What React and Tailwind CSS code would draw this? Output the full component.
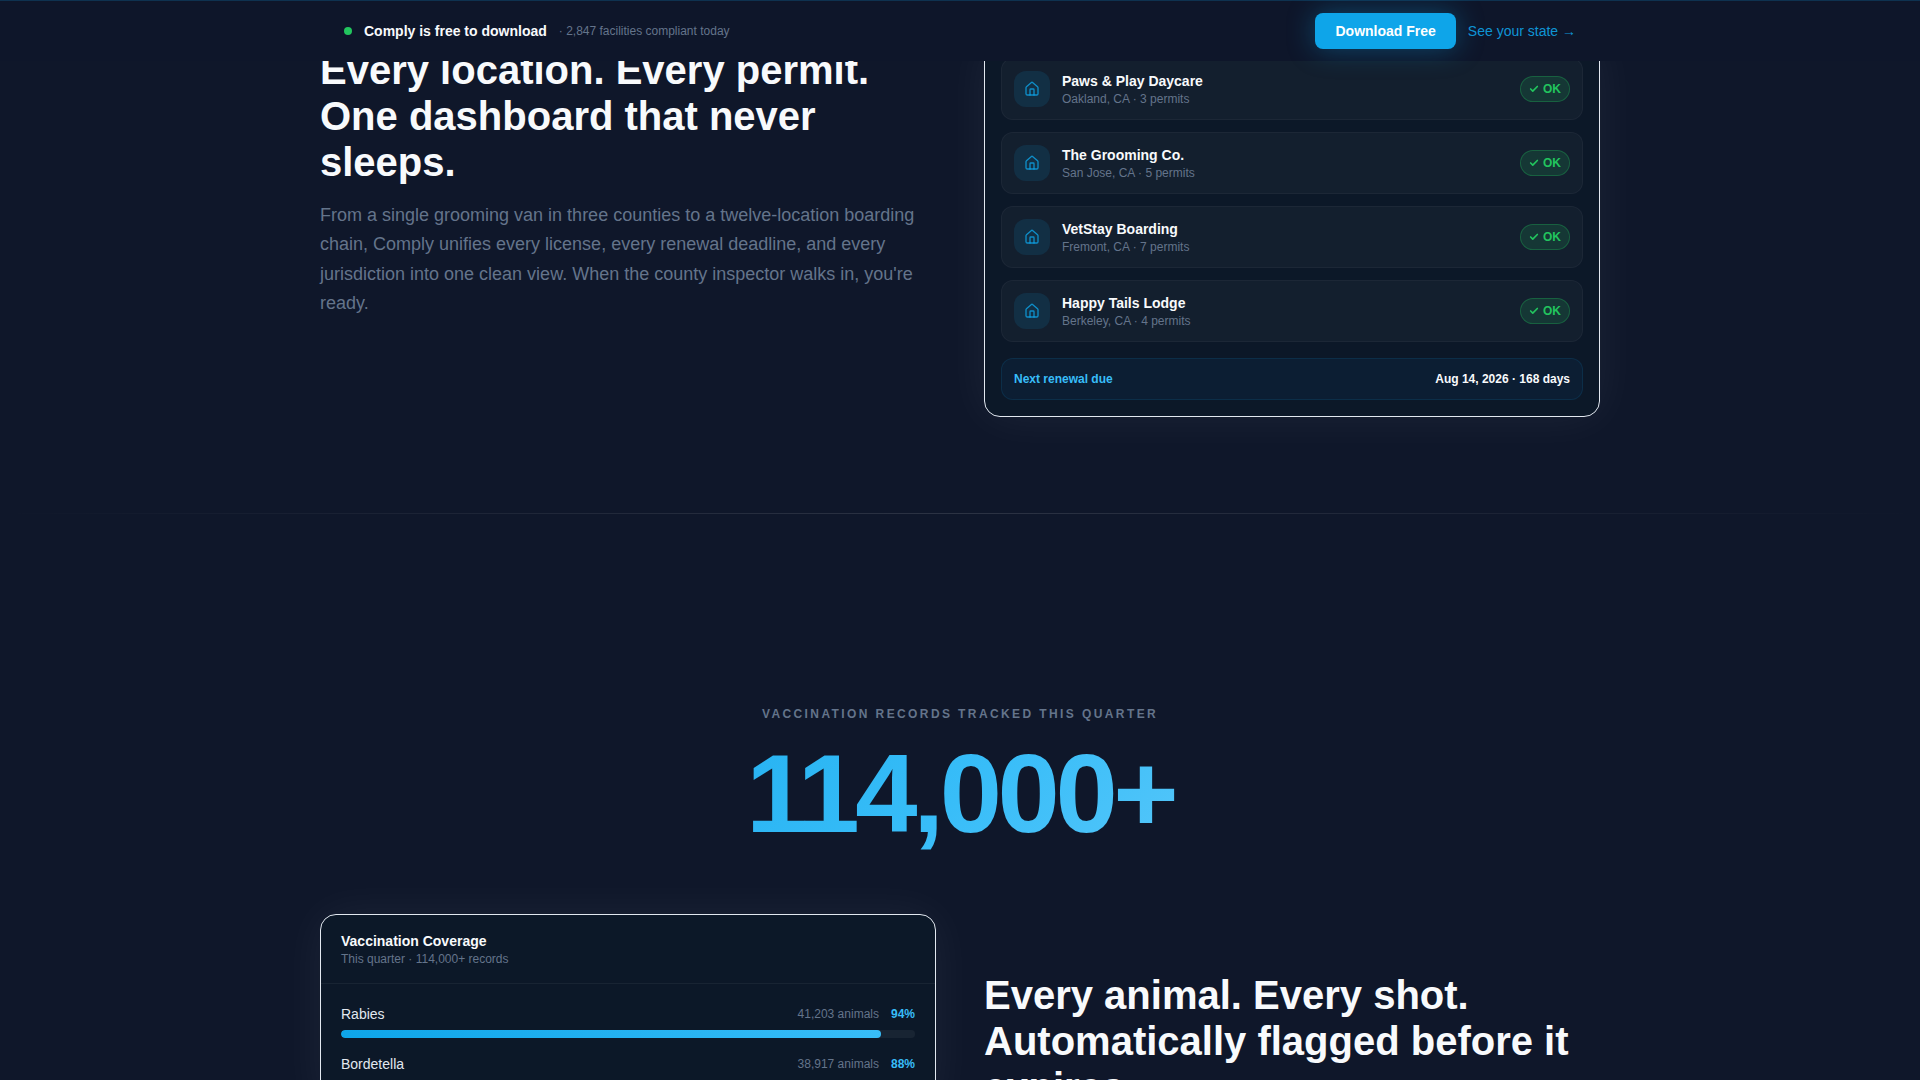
import { Check, House } from 'lucide-react';

const facilities = [
    { name: 'Paws & Play Daycare', city: 'Oakland, CA', permits: 3 },
    { name: 'The Grooming Co.', city: 'San Jose, CA', permits: 5 },
    { name: 'VetStay Boarding', city: 'Fremont, CA', permits: 7 },
    { name: 'Happy Tails Lodge', city: 'Berkeley, CA', permits: 4 },
];

const vaccines = [
    { name: 'Rabies', animals: '41,203', coverage: 94 },
    { name: 'Bordetella', animals: '38,917', coverage: 88 },
];

const TopBar = () => (
    <header className="fixed inset-x-0 top-0 z-50 bg-[#0e162a] border-t border-[#0ea5e9]/20">
        <div className="max-w-7xl mx-auto px-6 py-3 flex items-center justify-between gap-4">
            <div className="flex items-center gap-3">
                <span className="size-2 rounded-full bg-[#22c55e]" />
                <span className="text-sm font-bold text-[#f8fafc]">Comply is free to download</span>
                <span className="text-xs text-[#64748b]">· 2,847 facilities compliant today</span>
            </div>
            <div className="flex items-center gap-3">
                <button
                    type="button"
                    className="px-5 py-2 rounded-lg bg-[#0ea5e9] text-sm font-bold text-white shadow-[0_0_28px_rgba(14,165,233,0.35)]"
                >
                    Download Free
                </button>
                <a href="#states" className="text-sm text-[#0ea5e9]/90">See your state →</a>
            </div>
        </div>
    </header>
);

const Panel = ({ children }) => (
    <div className="rounded-2xl border border-[#e2e8f0] bg-[#0c1828] shadow-[0_0_48px_rgba(255,255,255,0.06)]">
        {children}
    </div>
);

const FacilityRow = ({ facility }) => (
    <li className="flex items-center gap-3 p-3 rounded-xl border border-white/4 bg-white/3">
        <div className="size-9 rounded-xl bg-[#0ea5e9]/12 flex items-center justify-center">
            <House className="size-4 text-[#0ea5e9]/80" />
        </div>
        <div className="flex-1">
            <p className="text-sm font-bold text-[#f8fafc]">{facility.name}</p>
            <p className="text-xs text-[#64748b]">{facility.city} · {facility.permits} permits</p>
        </div>
        <span className="flex items-center gap-1 px-2 py-1 rounded-full border border-[#22c55e]/30 bg-[#22c55e]/15 text-xs font-bold text-[#22c55e]">
            <Check className="size-2.5" strokeWidth={4} />
            OK
        </span>
    </li>
);

const VaccineRow = ({ vaccine }) => (
    <li>
        <div className="flex items-center justify-between mb-1.5">
            <span className="text-sm text-[#e2e8f0]">{vaccine.name}</span>
            <span className="flex items-center gap-3 text-xs">
                <span className="text-[#64748b]">{vaccine.animals} animals</span>
                <span className="font-bold text-[#38bdf8]">{vaccine.coverage}%</span>
            </span>
        </div>
        <div className="h-2 rounded-full bg-white/5 overflow-hidden">
            <div
                className="h-full rounded-full bg-linear-to-r/srgb from-[#0ea5e9] to-[#38bdf8]"
                style={{ width: `${vaccine.coverage}%` }}
            />
        </div>
    </li>
);

const App = () => {
    return (
        <div className="h-screen overflow-hidden bg-[#0f172a] font-['Liberation_Sans',Arial,sans-serif]">
            <TopBar />

            <main>
                {/* Locations */}
                <section className="max-w-7xl mx-auto pt-[41px] pb-24 grid grid-cols-2 items-start gap-12">
                    <div className="pt-1.5">
                        <h2 className="text-[40px] leading-[46px] font-bold text-[#f8fafc]">
                            Every location. Every permit. One dashboard that never sleeps.
                        </h2>
                        <p className="mt-4 text-lg leading-relaxed text-[#64748b]">
                            From a single grooming van in three counties to a twelve-location boarding chain, Comply
                            unifies every license, every renewal deadline, and every jurisdiction into one clean view.
                            When the county inspector walks in, you're ready.
                        </p>
                    </div>
                    <Panel>
                        <div className="p-4">
                            <ul className="space-y-3">
                                {facilities.map((facility) => (
                                    <FacilityRow key={facility.name} facility={facility} />
                                ))}
                            </ul>
                            <div className="mt-4 p-3 flex items-center justify-between rounded-xl border border-[#0ea5e9]/12 bg-[#0c1e33] text-xs font-bold">
                                <span className="text-[#38bdf8]">Next renewal due</span>
                                <span className="text-[#f8fafc]">Aug 14, 2026 · 168 days</span>
                            </div>
                        </div>
                    </Panel>
                </section>

                <div className="h-px bg-linear-to-r from-transparent via-white/12 to-transparent" />

                {/* Vaccinations */}
                <section className="max-w-7xl mx-auto pt-48">
                    <div className="text-center">
                        <p className="text-xs font-bold uppercase tracking-[0.2em] text-[#64748b]">
                            Vaccination records tracked this quarter
                        </p>
                        <p className="mt-4 text-[112px] leading-none font-bold tracking-[-0.04em] text-transparent bg-clip-text bg-linear-135/srgb from-[#0ea5e9] via-[#38bdf8] to-[#7dd3fc]">
                            114,000+
                        </p>
                    </div>

                    <div className="mt-16 grid grid-cols-2 items-start gap-12">
                        <Panel>
                            <div className="px-5 py-4 border-b border-white/5">
                                <h3 className="text-sm font-bold text-[#f8fafc]">Vaccination Coverage</h3>
                                <p className="text-xs text-[#64748b]">This quarter · 114,000+ records</p>
                            </div>
                            <ul className="p-5 space-y-4">
                                {vaccines.map((vaccine) => (
                                    <VaccineRow key={vaccine.name} vaccine={vaccine} />
                                ))}
                            </ul>
                        </Panel>
                        <h2 className="pt-[58px] text-[40px] leading-[46px] font-bold text-[#f8fafc]">
                            Every animal. Every shot. Automatically flagged before it expires.
                        </h2>
                    </div>
                </section>
            </main>
        </div>
    );
};

export default App;
